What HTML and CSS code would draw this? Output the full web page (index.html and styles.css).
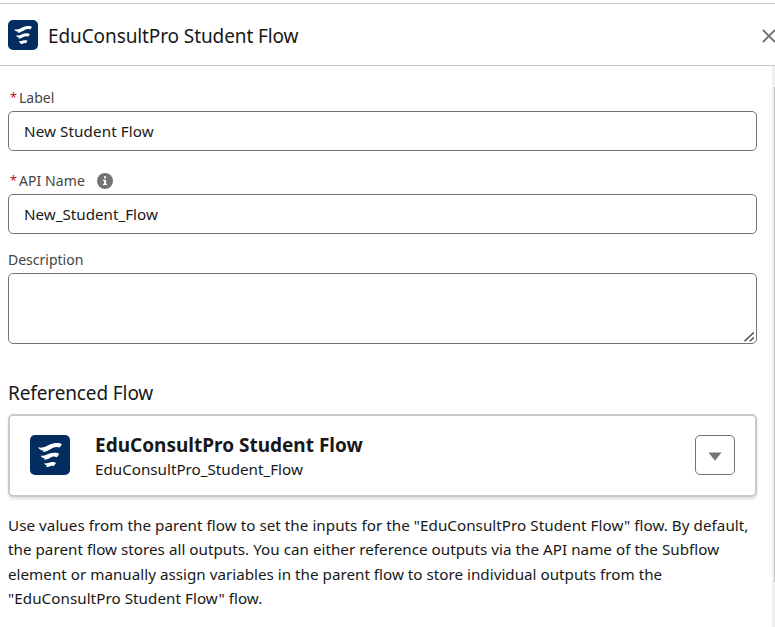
FILE: index.html
```html
<!DOCTYPE html>
<html lang="en">
<head>
<meta charset="utf-8">
<title>EduConsultPro Student Flow</title>
<link rel="stylesheet" href="styles.css">
</head>
<body>
<svg class="defs" aria-hidden="true">
  <symbol id="waves" viewBox="0 0 40 40">
    <path d="M8 12.300C13 13.800 17 10.600 20.500 9.200C24 7.800 28 7.800 30.500 8.400C31.500 8.700 32 9.300 31.700 9.800L29.600 12.600C26.500 11.300 23.500 12.500 20.500 14.200C17.500 15.900 14.500 17.300 12.700 17L14 15.700C11.500 15.600 9.200 14.600 8 12.300Z"/>
    <path d="M10.700 20.500C14 21.300 17 19.600 19.500 18.600C22.500 17.500 26 17.600 28 18.200C29 18.600 29.300 19 29 19.400L26.800 22.300C24.500 21 22.500 21.700 20 22.900C17.500 24.200 15.200 24.900 13.500 24.400L14.800 23.300C12.700 23 11.300 22.300 10.700 20.500Z"/>
    <path d="M14.300 28.200C16.500 28.700 18 27.900 20 27.400C22 26.900 24 27 25.200 27.400C25.800 27.700 26 28 25.700 28.400L23.600 31.200C22 30.200 20.800 30.900 19.500 31.500C18.200 32 17 32 16 31.700L17.100 30.600C15.500 30.200 14.700 29.400 14.300 28.200Z"/>
  </symbol>
</svg>
<main class="modal">
  <header class="head">
    <svg class="logo small"><use href="#waves"/></svg>
    <h1>EduConsultPro Student Flow</h1>
    <svg class="close" viewBox="0 0 14 14"><path d="M1.500 1.500L12.500 12.500M12.500 1.500L1.500 12.500"/></svg>
  </header>
  <div class="content">
    <form class="body">
      <label class="lab" for="label"><span class="req">*</span>Label</label>
      <input id="label" class="box wide" value="New Student Flow">
      <label class="lab api" for="api"><span class="req">*</span>API Name
        <svg class="info" viewBox="0 0 16 16"><circle cx="8" cy="8" r="8"/><path d="M7 3.300h2v2H7zM6 6.700h3v4h1v1.300H6v-1.300h1V8H6z"/></svg>
      </label>
      <input id="api" class="box" value="New_Student_Flow">
      <label class="lab desc" for="desc">Description</label>
      <div class="area-wrap">
        <textarea id="desc" class="area"></textarea>
        <svg class="grip" viewBox="0 0 11 10"><path d="M.5 9.300L9.800 .6M5.800 9.300L9.800 5.600"/></svg>
      </div>
      <h2>Referenced Flow</h2>
      <section class="card">
        <svg class="logo"><use href="#waves"/></svg>
        <div class="names">
          <div class="name">EduConsultPro Student Flow</div>
          <div class="sub">EduConsultPro_Student_Flow</div>
        </div>
        <button class="menu" type="button" aria-label="Actions"><svg viewBox="0 0 14 9"><path d="M.5 .5H13.500L7 8.700Z"/></svg></button>
      </section>
      <p class="help"><span class="l1">Use values from the parent flow to set the inputs for the "EduConsultPro Student Flow" flow. By default,</span><br><span class="l2">the parent flow stores all outputs. You can either reference outputs via the API name of the Subflow</span><br><span class="l3">element or manually assign variables in the parent flow to store individual outputs from the</span><br><span class="l4">"EduConsultPro Student Flow" flow.</span></p>
    </form>
    <div class="scroll"><div class="thumb"></div></div>
  </div>
</main>
</body>
</html>
```

FILE: styles.css
```css
* { box-sizing: border-box; }
body { margin: 0; background: #fff; color: #181818; font-family: "Noto Sans", "Open Sans", sans-serif; font-size: 15.2px; overflow: hidden; }
.defs { position: absolute; width: 0; height: 0; }
.modal { display: flex; flex-direction: column; height: 627px; padding-top: 3px; overflow: hidden; }
.head { display: flex; align-items: center; height: 63px; flex: none; padding-left: 8px; border-top: 1px solid #c9c9c9; border-bottom: 1px solid #c9c9c9; }
.logo { width: 40px; height: 40px; flex: none; border-radius: 5px; background: #032d60; fill: #fff; }
.logo.small { width: 30px; height: 30px; }
h1, h2 { margin: 0; font-weight: 400; white-space: nowrap; }
h1 { flex: 1; margin-left: 10px; padding-top: 2px; font-size: 19px; line-height: 26px; letter-spacing: -.1px; }
.close { width: 14px; height: 14px; flex: none; margin: 2px -1px 0 0; fill: none; stroke: #747474; stroke-width: 1.9; stroke-linecap: round; }
.content { display: flex; flex: 1; min-height: 0; }
.body { flex: 1; margin: 0; padding: 21px 15px 0 8px; }
.lab { display: flex; align-items: center; height: 20px; margin-bottom: 4px; padding-left: 2px; color: #444; font-size: 14px; white-space: nowrap; }
.req { width: 9px; color: #ba0517; font-size: 12.500px; }
.api { margin-top: 19px; letter-spacing: .08px; }
.info { width: 16px; height: 16px; margin-left: 12px; margin-top: 1px; fill: #747474; }
.info path { fill: #fff; }
.desc { margin-top: 15px; padding-left: 0; }
.box, .area { display: block; width: 100%; border: 1px solid #747474; border-radius: 5px; background: #fff; color: #181818; font: inherit; outline: none; }
.box { height: 40px; padding: 0 15px; }
.wide { letter-spacing: .1px; }
.area-wrap { position: relative; }
.area { height: 71px; resize: none; }
.grip { position: absolute; right: 2px; bottom: 2px; width: 11px; height: 10px; fill: none; stroke: #444; stroke-width: 1.4; }
h2 { margin-top: 36px; font-size: 19px; line-height: 26px; letter-spacing: -.12px; }
.card { display: flex; align-items: center; height: 83px; margin-top: 8px; padding: 0 20px 1px; border: 2px solid #c9c9c9; border-radius: 5px; box-shadow: 0 2px 3px rgba(0,0,0,.12); }
.names { flex: 1; margin-left: 25px; padding-top: 3px; white-space: nowrap; }
.name { font-size: 19px; font-weight: 700; line-height: 24px; }
.sub { line-height: 24px; }
.menu { display: flex; align-items: center; justify-content: center; width: 40px; height: 40px; padding: 0; border: 1px solid #747474; border-radius: 5px; background: #fff; }
.menu svg { width: 14px; height: 9px; margin-top: 3px; fill: #747474; }
.help { margin: 16px 0 0; line-height: 24.4px; white-space: nowrap; }
.l1 { letter-spacing: .043px; }
.l2 { letter-spacing: .03px; }
.l3 { letter-spacing: .015px; }
.l4 { letter-spacing: .05px; }
.scroll { width: 3px; padding: 21px 0 0 2px; background: #f0f0f0; }
.thumb { height: 495px; background: #c1c1c1; }
```
